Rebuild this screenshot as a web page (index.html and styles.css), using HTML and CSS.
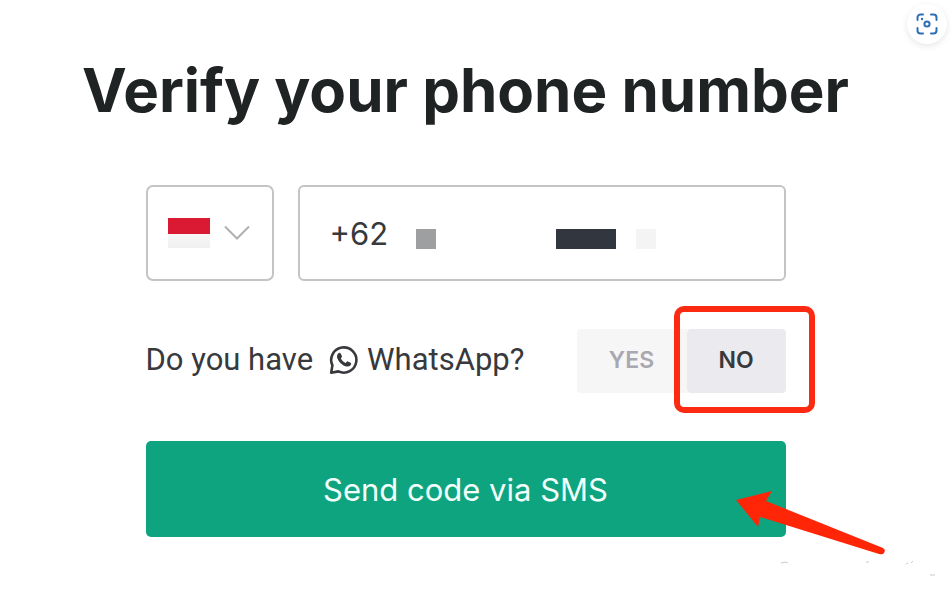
FILE: index.html
```html
<!DOCTYPE html>
<html lang="en">
<head>
<meta charset="utf-8">
<meta name="viewport" content="width=device-width, initial-scale=1">
<title>Verify your phone number</title>
<link rel="stylesheet" href="styles.css">
</head>
<body>
<button class="capture" type="button" aria-label="Visual search">
  <svg viewBox="0 0 22 22" width="22" height="22" fill="none" stroke="#2f6eb5" stroke-width="2" stroke-linecap="round">
    <path d="M1.500 7V4.500a3 3 0 0 1 3-3H7M15 1.500h2.500a3 3 0 0 1 3 3V7M20.500 15v2.500a3 3 0 0 1-3 3H15M7 20.500H4.500a3 3 0 0 1-3-3V15"/>
    <circle cx="11" cy="11" r="2.600"/>
    <circle cx="6" cy="6" r="1.200" fill="#2f6eb5" stroke="none"/>
  </svg>
</button>
<main class="verify">
  <h1 class="title">Verify your phone number</h1>
  <form class="form">
    <div class="phone-row">
      <div class="country">
        <select class="country-select" aria-label="Country">
          <option value="ID" label=" "></option>
        </select>
        <span class="flag"></span>
        <svg class="chevron" viewBox="0 0 26 16" width="26" height="16" fill="none" stroke="#aeb0b2" stroke-width="2"><path d="M1 1.500l12 12 12-12"/></svg>
      </div>
      <div class="phone">
        <input class="phone-input" type="tel" value="+62" aria-label="Phone number">
        <span class="mask mask-gray"></span>
        <span class="mask mask-dark"></span>
        <span class="mask mask-light"></span>
      </div>
    </div>
    <div class="whatsapp-row">
      <p class="question">
        <span>Do you have</span>
        <svg class="whatsapp" viewBox="0 0 30 30" width="30" height="30">
          <path d="M2.200 27.800L3.400 20.400A12.600 12.600 0 1 1 9.400 26.400Z" fill="none" stroke="#37393c" stroke-width="2.600" stroke-linejoin="round"/>
          <path d="M9.200 8.400C10 7.600 11.300 7.700 11.800 8.700L13 11.300C13.200 11.900 12.400 12.800 11.900 13.400C13 15.500 14.700 17 16.800 17.900C17.500 17.300 18.100 16.100 18.900 16.400L21.600 17.700C22.600 18.300 22 19.800 21.300 20.500C19.500 22.200 16.500 21.500 13.800 19.900C11.300 18.200 9.200 15.700 8.300 13.200C7.700 11.400 8 9.600 9.200 8.400Z" fill="#37393c"/>
        </svg>
        <span>WhatsApp?</span>
      </p>
      <div class="choices">
        <button class="choice" type="button">YES</button>
        <button class="choice choice-on" type="button">NO<span class="highlight"></span></button>
      </div>
    </div>
    <div class="submit">
      <button class="send" type="button">Send code via SMS</button>
      <svg class="arrow" viewBox="0 0 150 66" width="150" height="66"><path d="M0 10L36 1L30 11L147 58Q150 60 148 63Q147 65 143 64L24 27L22 37Z" fill="#fe2606"/></svg>
    </div>
  </form>
</main>
<svg class="specks" viewBox="0 0 160 20" width="160" height="20" fill="none" stroke="#c9c9c9" stroke-width="1"><path d="M2 2l4-1 3 1M87 1h3M127 3l2-1M132 2l2-2M151 14h5"/></svg>
</body>
</html>
```
FILE: styles.css
```css
* { box-sizing: border-box; }

body {
  margin: 0;
  background: #fff;
  color: #37393c;
  font-family: Inter, "Liberation Sans", sans-serif;
}

button, input, select { font: inherit; color: inherit; margin: 0; }

.capture {
  position: absolute;
  top: 4px;
  right: 4px;
  display: grid;
  place-items: center;
  width: 40px;
  height: 40px;
  padding: 0;
  border: 0;
  border-radius: 50%;
  background: #fff;
  box-shadow: 0 2px 6px rgba(0, 0, 0, 0.1);
}

.verify {
  display: flex;
  flex-direction: column;
  align-items: center;
  padding: 50px 20px 24px 0;
}

.title {
  margin: 0 0 55px;
  color: #202324;
  font-size: 60px;
  font-weight: 700;
  line-height: 80px;
  white-space: nowrap;
}

.form {
  display: flex;
  flex-direction: column;
  gap: 48px;
  width: 100%;
  max-width: 640px;
}

.phone-row { display: flex; gap: 24px; }

.country {
  position: relative;
  display: flex;
  align-items: center;
  gap: 14px;
  width: 128px;
  padding-left: 22px;
}

.country-select {
  position: absolute;
  inset: 0;
  width: 100%;
  appearance: none;
  border: 2px solid #c4c4c6;
  border-radius: 7px;
  background: transparent;
}

.flag {
  width: 42px;
  height: 30px;
  background: linear-gradient(#d91a32 0 16px, #f7f7f7 16px, #f0f0f0);
}

.phone { position: relative; flex: 1; }

.phone-input {
  display: block;
  width: 100%;
  height: 96px;
  padding: 0 30px;
  border: 2px solid #c4c4c6;
  border-radius: 6px;
  background: #fff;
  font-size: 31px;
}

.mask { position: absolute; top: 44px; height: 20px; }
.mask-gray { left: 118px; width: 20px; background: #9d9fa1; }
.mask-dark { left: 258px; width: 60px; background: #31363f; }
.mask-light { left: 338px; width: 20px; background: #f4f4f4; }

.whatsapp-row {
  display: flex;
  align-items: center;
  justify-content: space-between;
}

.question {
  display: flex;
  align-items: center;
  margin: 0;
  font-family: Roboto, sans-serif;
  font-size: 31px;
  line-height: 36px;
  padding-bottom: 2px;
  white-space: nowrap;
}

.whatsapp { margin: 0 8px 0 16px; }

.choices { display: flex; }

.choice {
  position: relative;
  width: 110px;
  height: 64px;
  padding: 0 0 3px;
  border: 0;
  border-radius: 4px 0 0 4px;
  background: #f6f6f7;
  color: #a9a8b0;
  font-size: 23px;
  font-weight: 600;
}

.choice-on {
  width: 99px;
  border-radius: 4px;
  background: #ebebef;
  color: #37393c;
}

.highlight {
  position: absolute;
  inset: -23px -29px -20px -13px;
  border: 6px solid #fb2a10;
  border-radius: 10px;
}

.submit { position: relative; }

.send {
  display: block;
  width: 100%;
  height: 96px;
  border: 0;
  border-radius: 5px;
  background: #0ea47f;
  color: #f2fffb;
  font-size: 31px;
}

.arrow { position: absolute; top: 49px; right: -100px; }

.specks { display: block; margin: 0 12px 0 auto; }
```
